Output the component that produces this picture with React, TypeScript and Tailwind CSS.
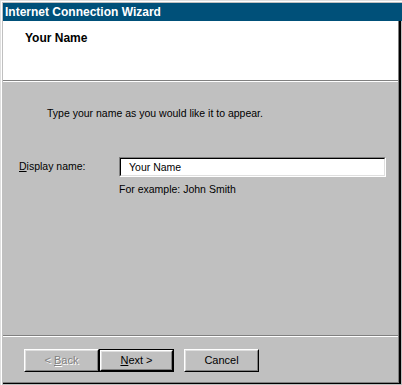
import React from "react";

type BtnProps = {
  children: React.ReactNode;
  isDefault?: boolean;
  disabled?: boolean;
};

const WinButton = ({ children, isDefault, disabled }: BtnProps) => {
  const face = (
    <div className="flex-1 flex border border-t-white border-l-white border-r-black border-b-black">
      <div
        className={
          "flex-1 flex items-center justify-center border border-t-[#dfdfdf] border-l-[#dfdfdf] border-r-[#808080] border-b-[#808080] text-[11px] leading-[13px] " +
          (disabled ? "text-[#808080] [text-shadow:1px_1px_0_#ffffff]" : "text-black")
        }
      >
        {children}
      </div>
    </div>
  );

  if (isDefault) {
    return <div className="w-[75px] h-[23px] flex border border-black">{face}</div>;
  }
  return <div className="w-[75px] h-[23px] flex">{face}</div>;
};

export default function App() {
  return (
    <div className="w-[402px] h-[385px] bg-[#c0c0c0] border-l border-t border-[#dfdfdf] flex flex-col font-['Liberation_Sans',Arial,sans-serif] text-black overflow-hidden">
      <div className="flex-1 flex flex-col border-l border-t border-white pt-px pl-px pb-px">
        {/* title bar */}
        <div className="h-[18px] bg-[#005079] text-white font-bold text-[12px] leading-[18px] pl-[2px] whitespace-nowrap">
          Internet Connection Wizard
        </div>

        <div className="flex-1 flex flex-col pr-px">
          <div className="flex-1 flex flex-col border-r-2 border-b border-black">
            <div className="flex-1 flex flex-col border-r border-b border-[#808080]">
              {/* header */}
              <div className="h-[60px] bg-white border-b border-[#808080] pl-[22px] pt-[10px]">
                <p className="font-bold text-[12px] leading-[14px]">Your Name</p>
              </div>
              <div className="h-px bg-white" />

              {/* body */}
              <div className="flex-1 flex flex-col text-[10.5px] leading-[14px]">
                <p className="mt-[24px] pl-[44px]">
                  Type your name as you would like it to appear.
                </p>

                <div className="mt-[37px] flex items-start">
                  <div className="w-[116px] pl-[16px] pt-[2px]">
                    <span className="underline">D</span>isplay name:
                  </div>
                  <div className="w-[267px] h-[20px] flex border border-t-[#808080] border-l-[#808080] border-r-white border-b-white">
                    <div className="flex-1 bg-white border border-t-black border-l-black border-r-[#dfdfdf] border-b-[#dfdfdf] pl-[8px] leading-[16px]">
                      Your Name
                    </div>
                  </div>
                </div>

                <p className="mt-[5px] pl-[116px]">For example: John Smith</p>

                <div className="mt-auto h-px bg-[#808080]" />
                <div className="h-px bg-white" />

                <div className="flex items-start pl-[21px] pt-[12px] pb-[10px]">
                  <WinButton disabled>
                    &lt; <span className="underline ml-[3px]">B</span>ack
                  </WinButton>
                  <WinButton isDefault>
                    <span className="underline">N</span>ext &gt;
                  </WinButton>
                  <div className="w-[10px]" />
                  <WinButton>Cancel</WinButton>
                </div>
              </div>
            </div>
          </div>
        </div>
      </div>
    </div>
  );
}
